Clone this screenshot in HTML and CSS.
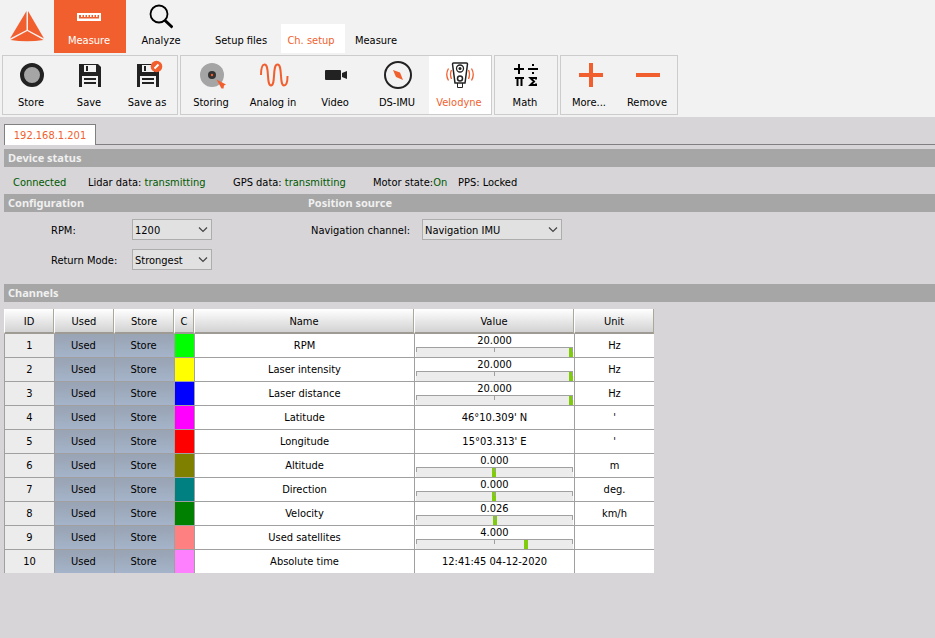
FILE: index.html
```html
<!DOCTYPE html>
<html lang="en">
<head>
    <meta charset="UTF-8">
    <meta name="viewport" content="width=device-width, initial-scale=1.0">
    <title>Channel setup - Velodyne</title>
    <link rel="stylesheet" href="styles.css">
</head>
<body>
    <header class="topbar">
        <svg class="logo" width="54" height="53" viewBox="0 0 54 53">
            <path d="M26.5 11 L10 38.500 L26.500 30 Z" fill="#f15f2f"/>
            <path d="M28 11 L44 38.500 L28 30 Z" fill="#f15f2f"/>
            <path d="M27.300 31 L43.500 40 Q27 42.500 10.500 40 Z" fill="#f15f2f"/>
        </svg>
        <button class="mode-btn active">
            <svg width="24" height="32" viewBox="0 0 24 32">
                <path d="M0 13H24V21H0Z M2 15V18.500H22V15H20.500V17H19V15H17.500V17H16V15H14.500V17H13V15H11.500V17H10V15H8.500V17H7V15H5.500V17H4V15Z" fill="#fff" fill-rule="evenodd"/>
            </svg>
            <span>Measure</span>
        </button>
        <button class="mode-btn">
            <svg width="24" height="32" viewBox="0 0 24 32">
                <circle cx="10" cy="14" r="8.500" fill="none" stroke="#000" stroke-width="1.800"/>
                <path d="M15.500 20L23.500 27.500" stroke="#000" stroke-width="3"/>
            </svg>
            <span>Analyze</span>
        </button>
        <nav class="page-tabs">
            <a href="#" class="page-tab">Setup files</a>
            <a href="#" class="page-tab active">Ch. setup</a>
            <a href="#" class="page-tab">Measure</a>
        </nav>
    </header>

    <div class="ribbon">
        <div class="group">
            <button class="tool">
                <svg width="32" height="32" viewBox="0 0 32 32"><circle cx="17" cy="16" r="10" fill="#a5a5a5" stroke="#222" stroke-width="4"/></svg>
                <span>Store</span>
            </button>
            <button class="tool">
                <svg width="32" height="32" viewBox="0 0 32 32">
                    <path d="M6 5H25L28 8V28H6Z" fill="#222"/>
                    <path d="M11 6H23V13H11Z M9 17H25V28H9Z" fill="#f2f2f2"/>
                    <path d="M13 7H15V12H13Z M11 19H23V21H11Z M11 23H23V25H11Z" fill="#222"/>
                </svg>
                <span>Save</span>
            </button>
            <button class="tool">
                <svg width="32" height="32" viewBox="0 0 32 32">
                    <path d="M6 5H25L28 8V28H6Z" fill="#222"/>
                    <path d="M11 6H23V13H11Z M9 17H25V28H9Z" fill="#f2f2f2"/>
                    <path d="M13 7H15V12H13Z M11 19H23V21H11Z M11 23H23V25H11Z" fill="#222"/>
                    <circle cx="25.500" cy="7.500" r="5.800" fill="#f15f2f"/>
                    <path d="M23.500 9.500L27.500 5.500" stroke="#fff" stroke-width="2"/>
                </svg>
                <span>Save as</span>
            </button>
        </div>
        <div class="group">
            <button class="tool wide">
                <svg width="32" height="32" viewBox="0 0 32 32">
                    <circle cx="17" cy="16" r="12" fill="#a5a5a5"/>
                    <circle cx="17" cy="16" r="4" fill="#333"/>
                    <circle cx="17" cy="16" r="1.200" fill="#f15f2f"/>
                    <path d="M21.500 20.500L31 25.500L29 26.500L28.500 29.500L26.500 29.500Z" fill="#f15f2f"/>
                </svg>
                <span>Storing</span>
            </button>
            <button class="tool wide">
                <svg width="32" height="32" viewBox="0 0 32 32"><path d="M4 16C4 9 5 5.500 7.500 5.500C13 5.500 9 26.500 14 26.500C19 26.500 15 5.500 20.500 5.500C26 5.500 22 26.500 27 26.500C29.500 26.500 30.500 23 30.500 17" fill="none" stroke="#f15f2f" stroke-width="2"/></svg>
                <span>Analog in</span>
            </button>
            <button class="tool wide">
                <svg width="32" height="32" viewBox="0 0 32 32">
                    <rect x="6" y="11" width="16" height="10" rx="1" fill="#222"/>
                    <path d="M23 14L28 12V20L23 18Z" fill="#222"/>
                </svg>
                <span>Video</span>
            </button>
            <button class="tool wide">
                <svg width="32" height="32" viewBox="0 0 32 32">
                    <circle cx="17" cy="16" r="13" fill="none" stroke="#222" stroke-width="2"/>
                    <path d="M12 11L19 13.500L22 21L15 18Z" fill="#f15f2f"/>
                </svg>
                <span>DS-IMU</span>
            </button>
            <button class="tool wide active">
                <svg width="32" height="32" viewBox="0 0 32 32" fill="none">
                    <path d="M9.500 5Q9.500 4 10.500 4H23.500Q24.500 4 24.500 5L22 24H12Z" stroke="#222" stroke-width="1.500"/>
                    <circle cx="17" cy="9.500" r="3.500" stroke="#222" stroke-width="1.300"/>
                    <circle cx="17" cy="9.500" r="1.500" fill="#222"/>
                    <circle cx="17" cy="19.500" r="2.500" stroke="#222" stroke-width="1.500"/>
                    <path d="M14.500 24V28.500H19.500V24" stroke="#222"/>
                    <path d="M8.500 11Q6.500 15 8.500 20M5.500 9.500Q2 15.500 5.500 21.500M25.500 11Q27.500 15 25.500 20M28.500 9.500Q32 15.500 28.500 21.500" stroke="#f15f2f" stroke-width="1.300"/>
                </svg>
                <span>Velodyne</span>
            </button>
        </div>
        <div class="group">
            <button class="tool wide">
                <svg width="32" height="32" viewBox="0 0 32 32" fill="none" stroke="#000" stroke-width="2">
                    <path d="M5 10H15M10 5V15M19 10H29M24 5V7M24 13V15"/>
                    <path d="M6 19H15M8.500 19V27M12.500 19V27"/>
                    <path d="M27 20.500V19H21.500L25 22.500L21.500 26H27V24.500"/>
                </svg>
                <span>Math</span>
            </button>
        </div>
        <div class="group">
            <button class="tool">
                <svg width="32" height="32" viewBox="0 0 32 32"><path d="M6 16H30M18 4V28" stroke="#f15f2f" stroke-width="4"/></svg>
                <span>More...</span>
            </button>
            <button class="tool">
                <svg width="32" height="32" viewBox="0 0 32 32"><path d="M5 16H29" stroke="#f15f2f" stroke-width="4"/></svg>
                <span>Remove</span>
            </button>
        </div>
    </div>

    <main>
        <div class="device-tabs">
            <a href="#" class="device-tab">192.168.1.201</a>
        </div>

        <h2 class="section-bar">Device status</h2>
        <div class="status">
            <span class="ok">Connected</span>
            <span>Lidar data: <span class="ok">transmitting</span></span>
            <span>GPS data: <span class="ok">transmitting</span></span>
            <span>Motor state:<span class="ok">On</span></span>
            <span>PPS: Locked</span>
        </div>

        <div class="config">
            <section class="config-left">
                <h2 class="section-bar">Configuration</h2>
                <div class="fields">
                    <label for="rpm">RPM:</label>
                    <div class="select">
                        <select id="rpm"><option>1200</option></select>
                        <svg width="10" height="6" viewBox="0 0 10 6"><path d="M1 0.500L5 4.500L9 0.500" fill="none" stroke="#444" stroke-width="1.200"/></svg>
                    </div>
                    <label for="mode">Return Mode:</label>
                    <div class="select">
                        <select id="mode"><option>Strongest</option></select>
                        <svg width="10" height="6" viewBox="0 0 10 6"><path d="M1 0.500L5 4.500L9 0.500" fill="none" stroke="#444" stroke-width="1.200"/></svg>
                    </div>
                </div>
            </section>
            <section class="config-right">
                <h2 class="section-bar">Position source</h2>
                <div class="fields">
                    <label for="nav">Navigation channel:</label>
                    <div class="select">
                        <select id="nav"><option>Navigation IMU</option></select>
                        <svg width="10" height="6" viewBox="0 0 10 6"><path d="M1 0.500L5 4.500L9 0.500" fill="none" stroke="#444" stroke-width="1.200"/></svg>
                    </div>
                </div>
            </section>
        </div>

        <h2 class="section-bar">Channels</h2>
        <table class="channels">
            <colgroup>
                <col class="col-id"><col class="col-btn"><col class="col-btn"><col class="col-color"><col class="col-name"><col class="col-value"><col class="col-unit">
            </colgroup>
            <thead>
                <tr><th>ID</th><th>Used</th><th>Store</th><th>C</th><th>Name</th><th>Value</th><th>Unit</th></tr>
            </thead>
            <tbody id="channelRows"></tbody>
        </table>
    </main>

    <script src="script.js"></script>
</body>
</html>
```
FILE: styles.css
```css
* { box-sizing: border-box; }
body { margin: 0; background: #d7d5d8; color: #000; font: 11px/14px "DejaVu Sans Condensed", Tahoma, "DejaVu Sans", sans-serif; }
button { font: inherit; color: inherit; border: 0; padding: 0; background: none; }
a { color: inherit; text-decoration: none; }
svg { display: block; }

/* top bar */
.topbar { display: flex; height: 53px; background: #f2f2f2; }
.mode-btn { width: 72px; display: flex; flex-direction: column; align-items: center; gap: 2px; padding: 0 2px 0 0; }
.mode-btn.active { background: #f15f2f; color: #fff; }
.page-tabs { display: flex; align-items: flex-end; margin-left: 3px; }
.page-tab { height: 29px; padding: 10px 0 0; width: 80px; text-align: center; }
.page-tab.active { width: 64px; padding-right: 4px; background: #fff; color: #f15f2f; }
.page-tab:last-child { width: 62px; }

/* ribbon */
.ribbon { display: flex; gap: 2px; padding: 2px; background: #f2f2f2; }
.group { display: flex; border: 1px solid #ccc; height: 60px; }
.tool { width: 58px; display: flex; flex-direction: column; align-items: center; justify-content: flex-start; gap: 5px; padding: 3px 2px 0 0; }
.tool.wide { width: 62px; }
.tool.active { background: #fff; color: #f15f2f; }

/* device page */
main { padding: 7px 0 0 4px; }
.device-tabs { display: flex; height: 21px; margin-bottom: 4px; box-shadow: inset 0 -1px #808080; }
.device-tab { width: 92px; border: 1px solid #808080; border-bottom: 0; background: #fff; color: #f15f2f; text-align: center; line-height: 21px; }
.section-bar { margin: 0; height: 18px; padding-left: 4px; background: #a6a6a6; color: #f0f0f0; font: bold 11px/17px "Noto Sans", Tahoma, sans-serif; }
.status { display: grid; grid-template-columns: 75px 145px 140px 85px auto; padding-left: 9px; height: 27px; line-height: 31px; white-space: nowrap; }
.ok { color: #005a00; }

.config { display: flex; height: 90px; }
.config-left { width: 300px; }
.config-right { flex: 1; }
.fields { display: grid; grid-template-columns: 81px 80px; row-gap: 9px; padding: 7px 0 0 47px; line-height: 21px; white-space: nowrap; }
.fields label { height: 21px; line-height: 23px; }
.config-right .fields { grid-template-columns: 111px 140px; padding-left: 7px; }
.select { position: relative; height: 21px; }
.select select { appearance: none; display: block; width: 100%; height: 21px; padding: 0 2px; border: 1px solid #adadad; border-radius: 0; background: #e1e1e1; color: #000; font: inherit; }
.select svg { position: absolute; right: 4px; top: 8px; pointer-events: none; }

/* channel table */
.channels { table-layout: fixed; width: 650px; margin-top: 7px; border-spacing: 0; text-align: center; }
.col-id { width: 50px; }
.col-btn { width: 60px; }
.col-color { width: 20px; }
.col-name { width: 220px; }
.col-value { width: 160px; }
.col-unit { width: 80px; }
.channels th { height: 25px; padding: 2px 0 0; font-weight: normal; background: linear-gradient(#fff, #d2d2d2); border-right: 1px solid #aca899; border-left: 1px solid #fff; border-bottom: 2px solid #9d9b93; }
.channels td { height: 24px; padding: 0 1px; background: #fff; border-left: 1px solid #a0a0a0; border-bottom: 1px solid #a0a0a0; }
.channels tr:last-child td { border-bottom: 0; height: 23px; }
.channels td.id { background: #ececec; }
.channels td.toggle { padding-right: 3px; background: linear-gradient(#98a3b3, #a5b4ca); }
.channels td.toggle button { display: block; width: 100%; }
.reading { line-height: 13px; }
.track { position: relative; height: 10px; background: #ececec; border: solid #a0a0a0; border-width: 1px 0 0; }
.track::before { content: ""; position: absolute; z-index: 1; left: 0; right: 0; top: 0; height: 4px; background: linear-gradient(#a0a0a0, #a0a0a0) center / 1px 4px no-repeat; border: solid #a0a0a0; border-width: 0 1px; }
.marker { position: absolute; top: 0; width: 4px; height: 9px; background: #80cc0c; }
```
FILE: script.js
```js
// level = marker position on the value track, in percent; null shows text only
const channels = [
    { name: 'RPM', color: '#00ff00', value: '20.000', level: 100, unit: 'Hz' },
    { name: 'Laser intensity', color: '#ffff00', value: '20.000', level: 100, unit: 'Hz' },
    { name: 'Laser distance', color: '#0000ff', value: '20.000', level: 100, unit: 'Hz' },
    { name: 'Latitude', color: '#ff00ff', value: "46°10.309' N", level: null, unit: "'" },
    { name: 'Longitude', color: '#ff0000', value: "15°03.313' E", level: null, unit: "'" },
    { name: 'Altitude', color: '#808000', value: '0.000', level: 49.5, unit: 'm' },
    { name: 'Direction', color: '#008080', value: '0.000', level: 49.5, unit: 'deg.' },
    { name: 'Velocity', color: '#008000', value: '0.026', level: 50.2, unit: 'km/h' },
    { name: 'Used satellites', color: '#ff8080', value: '4.000', level: 70.5, unit: '' },
    { name: 'Absolute time', color: '#ff80ff', value: '12:41:45 04-12-2020', level: null, unit: '' }
];

document.getElementById('channelRows').innerHTML = channels.map((c, i) => `
    <tr>
        <td class="id">${i + 1}</td>
        <td class="toggle"><button>Used</button></td>
        <td class="toggle"><button>Store</button></td>
        <td style="background: ${c.color}"></td>
        <td>${c.name}</td>
        <td>${c.level === null ? c.value : `
            <div class="reading">${c.value}</div>
            <div class="track"><div class="marker" style="left: calc((100% - 4px) * ${c.level / 100})"></div></div>`}
        </td>
        <td>${c.unit}</td>
    </tr>`).join('');
```
